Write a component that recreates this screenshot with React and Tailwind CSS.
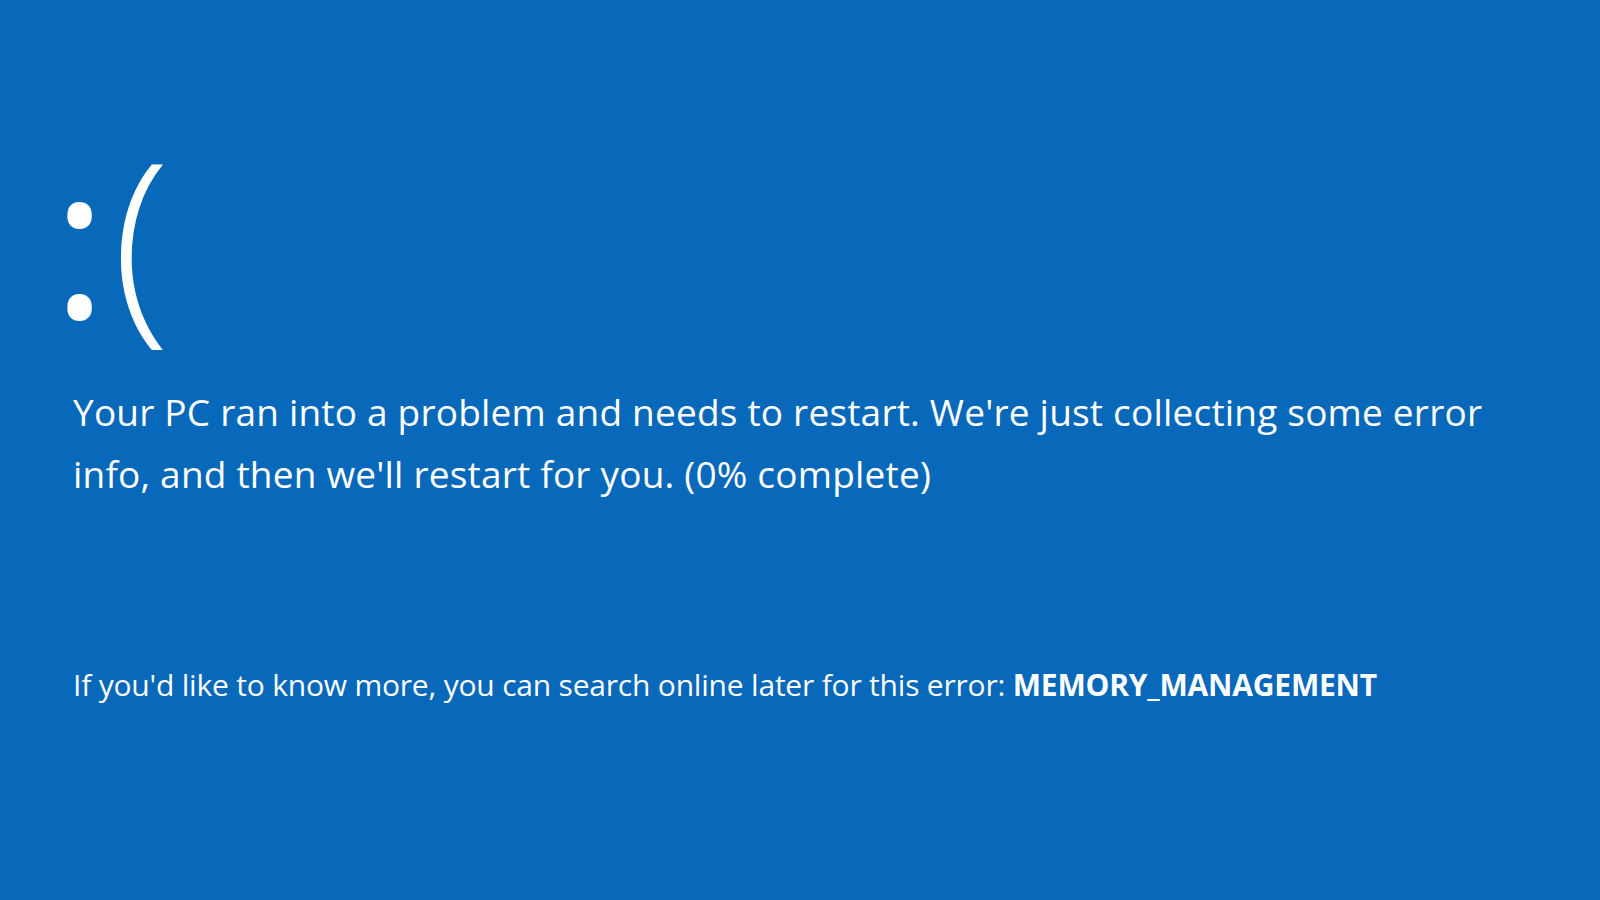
import React from "react";

export default function App() {
  return (
    <div
      className="w-full h-[900px] bg-[#0868ba] text-white pl-[70px] pt-[128px] overflow-hidden"
      style={{ fontFamily: '"Open Sans", "Noto Sans", sans-serif' }}
    >
      <div className="flex items-baseline h-[212px]">
        <span className="text-[210px] leading-none font-normal -ml-[18px] translate-y-[2px]">:</span>
        <span className="text-[212px] leading-none font-light ml-[5px]">(</span>
      </div>
      <div className="mt-[41px] text-[37px] leading-[62px] tracking-[0.2px] w-[1480px] pl-[3px]">
        <div>Your PC ran into a problem and needs to restart. We're just collecting some error</div>
        <div>info, and then we'll restart for you. (0% complete)</div>
      </div>
      <div className="mt-[160px] text-[30px] leading-[40px] tracking-[-0.2px] pl-[3px]">
        If you'd like to know more, you can search online later for this error:{" "}
        <span className="font-bold">MEMORY_MANAGEMENT</span>
      </div>
    </div>
  );
}
